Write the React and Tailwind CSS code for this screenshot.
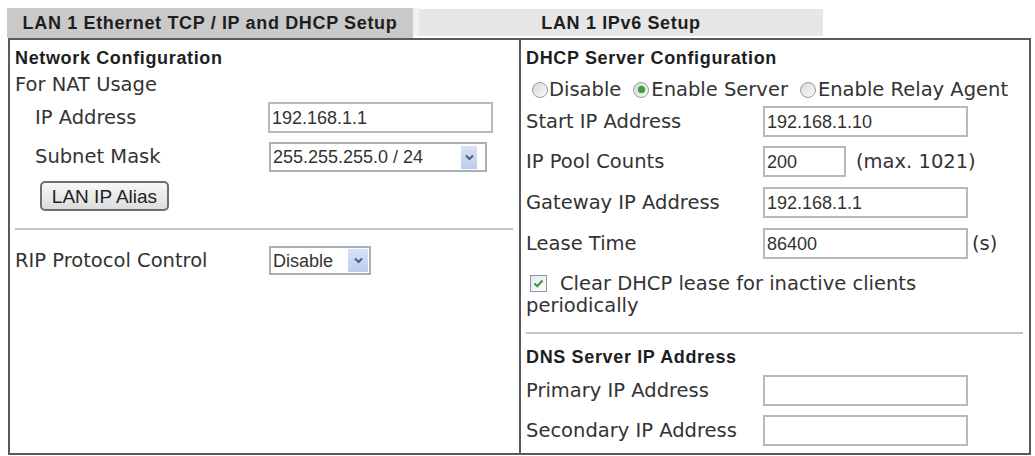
import React from "react";

const LABEL = "font-['DejaVu_Sans',sans-serif] text-[19.5px] text-[#333333] leading-none whitespace-nowrap";
const HEAD = "font-['Liberation_Sans',Arial,sans-serif] font-bold text-[18px] tracking-[0.65px] text-[#1e1e1e] leading-none whitespace-nowrap";
const INPUT_TXT = "font-['Liberation_Sans',Arial,sans-serif] text-[18px] text-[#333333] leading-none whitespace-nowrap";

function Chevron() {
  return (
    <svg width="9" height="7" viewBox="0 0 9 7">
      <path d="M1 1.5 L4.5 5 L8 1.5" fill="none" stroke="#4b5e88" strokeWidth="2" />
    </svg>
  );
}

function TextBox({ value, cls }) {
  return (
    <div className={"border-2 border-[#b7b9bc] bg-white flex items-center pl-[2px] " + cls}>
      <span className={INPUT_TXT}>{value}</span>
    </div>
  );
}

function Radio({ checked }) {
  return (
    <span className="w-[16px] h-[16px] shrink-0 rounded-full border-[1.5px] border-[#969ba2] bg-linear-to-br from-[#d8d8d8] to-[#fbfbfb] flex items-center justify-center">
      {checked && <span className="w-[7px] h-[7px] rounded-full bg-[#3f9b3f] shadow-[0_0_2px_#7fd07f]" />}
    </span>
  );
}

export default function App() {
  return (
    <div className="w-[1035px] h-[456px] bg-white relative overflow-hidden">
      {/* tabs */}
      <div className="flex items-start pt-[8px] pl-[7px] h-[38px]">
        <div className="w-[406px] h-[30px] bg-[#c9c9c9] flex items-center justify-center">
          <span className={HEAD}>LAN 1 Ethernet TCP / IP and DHCP Setup</span>
        </div>
        <div className="w-[6px] h-[28px] bg-[#f1f1f1]" />
        <div className="w-[404px] h-[27px] mt-[1px] bg-[#e6e6e6] flex items-center justify-center">
          <span className={HEAD}>LAN 1 IPv6 Setup</span>
        </div>
      </div>

      {/* main box */}
      <div className="ml-[8px] w-[1023px] h-[417px] border-2 border-[#5a5a5a] grid grid-cols-[509px_1fr]">
        {/* left panel */}
        <div className="flex flex-col pl-[5px] pt-[4px]">
          <div className="h-[28px] flex items-center">
            <span className={HEAD}>Network Configuration</span>
          </div>
          <div className="h-[25px] flex items-center">
            <span className={LABEL}>For NAT Usage</span>
          </div>
          <div className="mt-[5px] h-[31px] flex items-center">
            <div className="w-[253px] pl-[20px]">
              <span className={LABEL}>IP Address</span>
            </div>
            <TextBox value="192.168.1.1" cls="w-[225px] h-[31px]" />
          </div>
          <div className="mt-[9px] h-[30px] flex items-center">
            <div className="w-[254px] pl-[20px]">
              <span className={LABEL}>Subnet Mask</span>
            </div>
            <div className="w-[218px] h-[30px] border-2 border-[#a9b0bb] bg-white flex items-center pl-[2px] pr-[8px]">
              <span className={INPUT_TXT + " flex-1"}>255.255.255.0 / 24</span>
              <span className="w-[16px] h-[23px] bg-linear-to-b from-[#d7e2f5] to-[#bccdec] flex items-center justify-center">
                <Chevron />
              </span>
            </div>
          </div>
          <div className="mt-[9px] h-[30px] flex items-center pl-[25px]">
            <div className="w-[129px] h-[30px] rounded-[5px] border-2 border-[#6e6e6e] bg-linear-to-b from-[#f8f8f8] to-[#dcdcdc] flex items-center justify-center">
              <span className="font-['Liberation_Sans',Arial,sans-serif] text-[19px] text-[#222222] leading-none">LAN IP Alias</span>
            </div>
          </div>
          <div className="mt-[17px] h-[2px] mr-[6px] bg-[#c6c6c6]" />
          <div className="mt-[16px] h-[29px] flex items-center">
            <div className="w-[254px]">
              <span className={LABEL}>RIP Protocol Control</span>
            </div>
            <div className="w-[102px] h-[29px] border-2 border-[#a9b0bb] bg-white flex items-center pl-[2px] pr-[1px]">
              <span className={INPUT_TXT + " flex-1"}>Disable</span>
              <span className="w-[20px] h-[23px] bg-linear-to-b from-[#d7e2f5] to-[#bccdec] flex items-center justify-center">
                <Chevron />
              </span>
            </div>
          </div>
        </div>

        {/* right panel */}
        <div className="border-l-2 border-[#5a5a5a] flex flex-col pl-[5px] pt-[4px]">
          <div className="h-[28px] flex items-center">
            <span className={HEAD}>DHCP Server Configuration</span>
          </div>
          <div className="mt-[4px] h-[27px] flex items-center pl-[6px]">
            <Radio />
            <span className={LABEL + " ml-[1px]"}>Disable</span>
            <span className="ml-[12px]"><Radio checked /></span>
            <span className={LABEL + " ml-[2px]"}>Enable Server</span>
            <span className="ml-[12px]"><Radio /></span>
            <span className={LABEL + " ml-[2px]"}>Enable Relay Agent</span>
          </div>
          <div className="mt-[3px] h-[31px] flex items-center">
            <div className="w-[237px]"><span className={LABEL}>Start IP Address</span></div>
            <TextBox value="192.168.1.10" cls="w-[205px] h-[31px]" />
          </div>
          <div className="mt-[9px] h-[31px] flex items-center">
            <div className="w-[237px]"><span className={LABEL}>IP Pool Counts</span></div>
            <TextBox value="200" cls="w-[83px] h-[31px]" />
            <span className={LABEL + " ml-[10px]"}>(max. 1021)</span>
          </div>
          <div className="mt-[10px] h-[31px] flex items-center">
            <div className="w-[237px]"><span className={LABEL}>Gateway IP Address</span></div>
            <TextBox value="192.168.1.1" cls="w-[205px] h-[31px]" />
          </div>
          <div className="mt-[10px] h-[31px] flex items-center">
            <div className="w-[237px]"><span className={LABEL}>Lease Time</span></div>
            <TextBox value="86400" cls="w-[205px] h-[31px]" />
            <span className={LABEL + " ml-[4px]"}>(s)</span>
          </div>
          <div className="mt-[14px] font-['DejaVu_Sans',sans-serif] text-[19.5px] text-[#333333] leading-[22px] pr-[100px]">
            <span className="inline-flex align-[2px] ml-[4px] mr-[13px] w-[17px] h-[17px] border border-[#8797ad] bg-linear-to-br from-[#e4eaf1] to-[#fdfdfd] items-center justify-center">
              <svg width="11" height="9" viewBox="0 0 11 9">
                <path d="M1.5 4.5 L4.3 7.2 L9.5 1.5" fill="none" stroke="#3c9b3c" strokeWidth="2.2" />
              </svg>
            </span>
            Clear DHCP lease for inactive clients periodically
          </div>
          <div className="mt-[15px] h-[2px] mr-[6px] bg-[#c6c6c6]" />
          <div className="mt-[9px] h-[28px] flex items-center">
            <span className={HEAD}>DNS Server IP Address</span>
          </div>
          <div className="mt-[4px] h-[31px] flex items-center">
            <div className="w-[237px]"><span className={LABEL}>Primary IP Address</span></div>
            <TextBox value="" cls="w-[205px] h-[31px]" />
          </div>
          <div className="mt-[9px] h-[31px] flex items-center">
            <div className="w-[237px]"><span className={LABEL}>Secondary IP Address</span></div>
            <TextBox value="" cls="w-[205px] h-[31px]" />
          </div>
        </div>
      </div>
    </div>
  );
}
